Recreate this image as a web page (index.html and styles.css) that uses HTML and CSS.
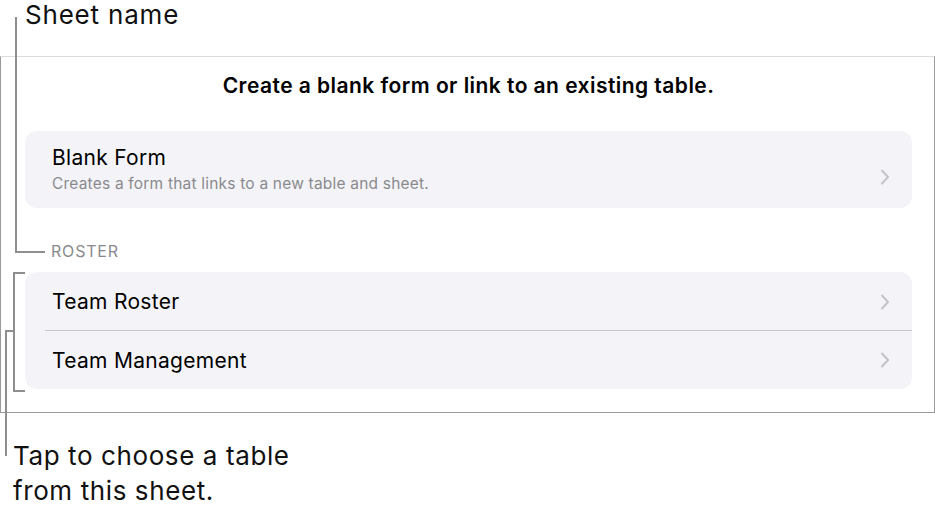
FILE: index.html
```html
<!DOCTYPE html>
<html>
<head>
<meta charset="utf-8">
<link rel="stylesheet" href="styles.css">
</head>
<body>
<div class="figure">
  <div class="callout callout-top">Sheet name</div>
  <section class="sheet">
    <h1 class="sheet-title">Create a blank form or link to an existing table.</h1>
    <div class="group">
      <div class="row row-tall">
        <div class="row-text">
          <div class="row-label">Blank Form</div>
          <div class="row-sub">Creates a form that links to a new table and sheet.</div>
        </div>
        <svg class="chev" viewBox="0 0 10 16" width="10" height="16"><path d="M2 1.5 L8 8 L2 14.5" fill="none" stroke="#c4c4c7" stroke-width="2" stroke-linecap="round" stroke-linejoin="round"/></svg>
      </div>
    </div>
    <div class="section-header">ROSTER</div>
    <div class="group">
      <div class="row row-sep">
        <div class="row-label">Team Roster</div>
        <svg class="chev" viewBox="0 0 10 16" width="10" height="16"><path d="M2 1.5 L8 8 L2 14.5" fill="none" stroke="#c4c4c7" stroke-width="2" stroke-linecap="round" stroke-linejoin="round"/></svg>
      </div>
      <div class="row">
        <div class="row-label">Team Management</div>
        <svg class="chev" viewBox="0 0 10 16" width="10" height="16"><path d="M2 1.5 L8 8 L2 14.5" fill="none" stroke="#c4c4c7" stroke-width="2" stroke-linecap="round" stroke-linejoin="round"/></svg>
      </div>
    </div>
  </section>
  <div class="callout callout-bottom">Tap to choose a table<br>from this sheet.</div>

  <div class="line line-sheet-v"></div>
  <div class="line line-sheet-h"></div>
  <div class="line bracket-v"></div>
  <div class="line bracket-top"></div>
  <div class="line bracket-bottom"></div>
  <div class="line tap-h"></div>
  <div class="line tap-v"></div>
</div>
</body>
</html>
```

FILE: styles.css
```css
* { box-sizing: border-box; }
html, body { margin: 0; padding: 0; background: #fff; }
body {
  font-family: Inter, "Noto Sans", "Liberation Sans", sans-serif;
  color: #000;
}
.figure {
  position: relative;
  width: 935px;
  height: 513px;
  overflow: hidden;
}
.callout {
  font-size: 26px;
  line-height: 30px;
  color: #111;
}
.callout-top {
  padding: 0 0 0 25px;
  margin-bottom: 26px;
  letter-spacing: 0.8px;
}
.callout-bottom {
  margin-top: 25px;
  padding-left: 13px;
  line-height: 35px;
  letter-spacing: 0.6px;
}
.sheet {
  width: 935px;
  border-top: 1px solid #dcdcdc;
  border-left: 1px solid #9a9a9a;
  border-right: 1px solid #9a9a9a;
  border-bottom: 1px solid #9a9a9a;
  padding: 16px 22px 23px 24px;
  display: flex;
  flex-direction: column;
}
.sheet-title {
  margin: 0 0 32px;
  text-align: center;
  font-size: 21px;
  line-height: 26px;
  font-weight: 600;
  letter-spacing: 0.45px;
}
.group {
  background: #f4f4f8;
  border-radius: 12px;
  display: flex;
  flex-direction: column;
}
.row {
  display: flex;
  align-items: center;
  justify-content: space-between;
  height: 58px;
  padding: 0 22px 0 27px;
  position: relative;
}
.row-sep { height: 59px; }
.row-sep::after {
  content: "";
  position: absolute;
  left: 20px;
  right: 0;
  bottom: 0;
  height: 1px;
  background: #c8c8cc;
}
.row-tall {
  height: 77px;
  align-items: flex-start;
  padding-top: 14px;
}
.row-tall .chev { margin-top: 24px; }
.row-label {
  font-size: 21px;
  line-height: 25px;
  letter-spacing: 0.3px;
  color: #000;
}
.row-sub {
  margin-top: 4px;
  font-size: 15.5px;
  line-height: 20px;
  letter-spacing: 0.2px;
  color: #8a8a8e;
}
.chev { flex: none; display: block; }
.section-header {
  margin: 33px 0 10px 26px;
  font-size: 16px;
  line-height: 21px;
  letter-spacing: 0.8px;
  color: #8a8a8e;
}
.line {
  position: absolute;
  background: #8e8e8e;
}
.line-sheet-v { left: 15px; top: 17px; width: 2px; height: 236px; }
.line-sheet-h { left: 15px; top: 251px; width: 30px; height: 2px; }
.bracket-v { left: 13px; top: 272px; width: 2px; height: 120px; }
.bracket-top { left: 13px; top: 272px; width: 12px; height: 2px; }
.bracket-bottom { left: 13px; top: 390px; width: 12px; height: 2px; }
.tap-h { left: 5px; top: 330px; width: 9px; height: 2px; }
.tap-v { left: 5px; top: 330px; width: 2px; height: 126px; }
```
